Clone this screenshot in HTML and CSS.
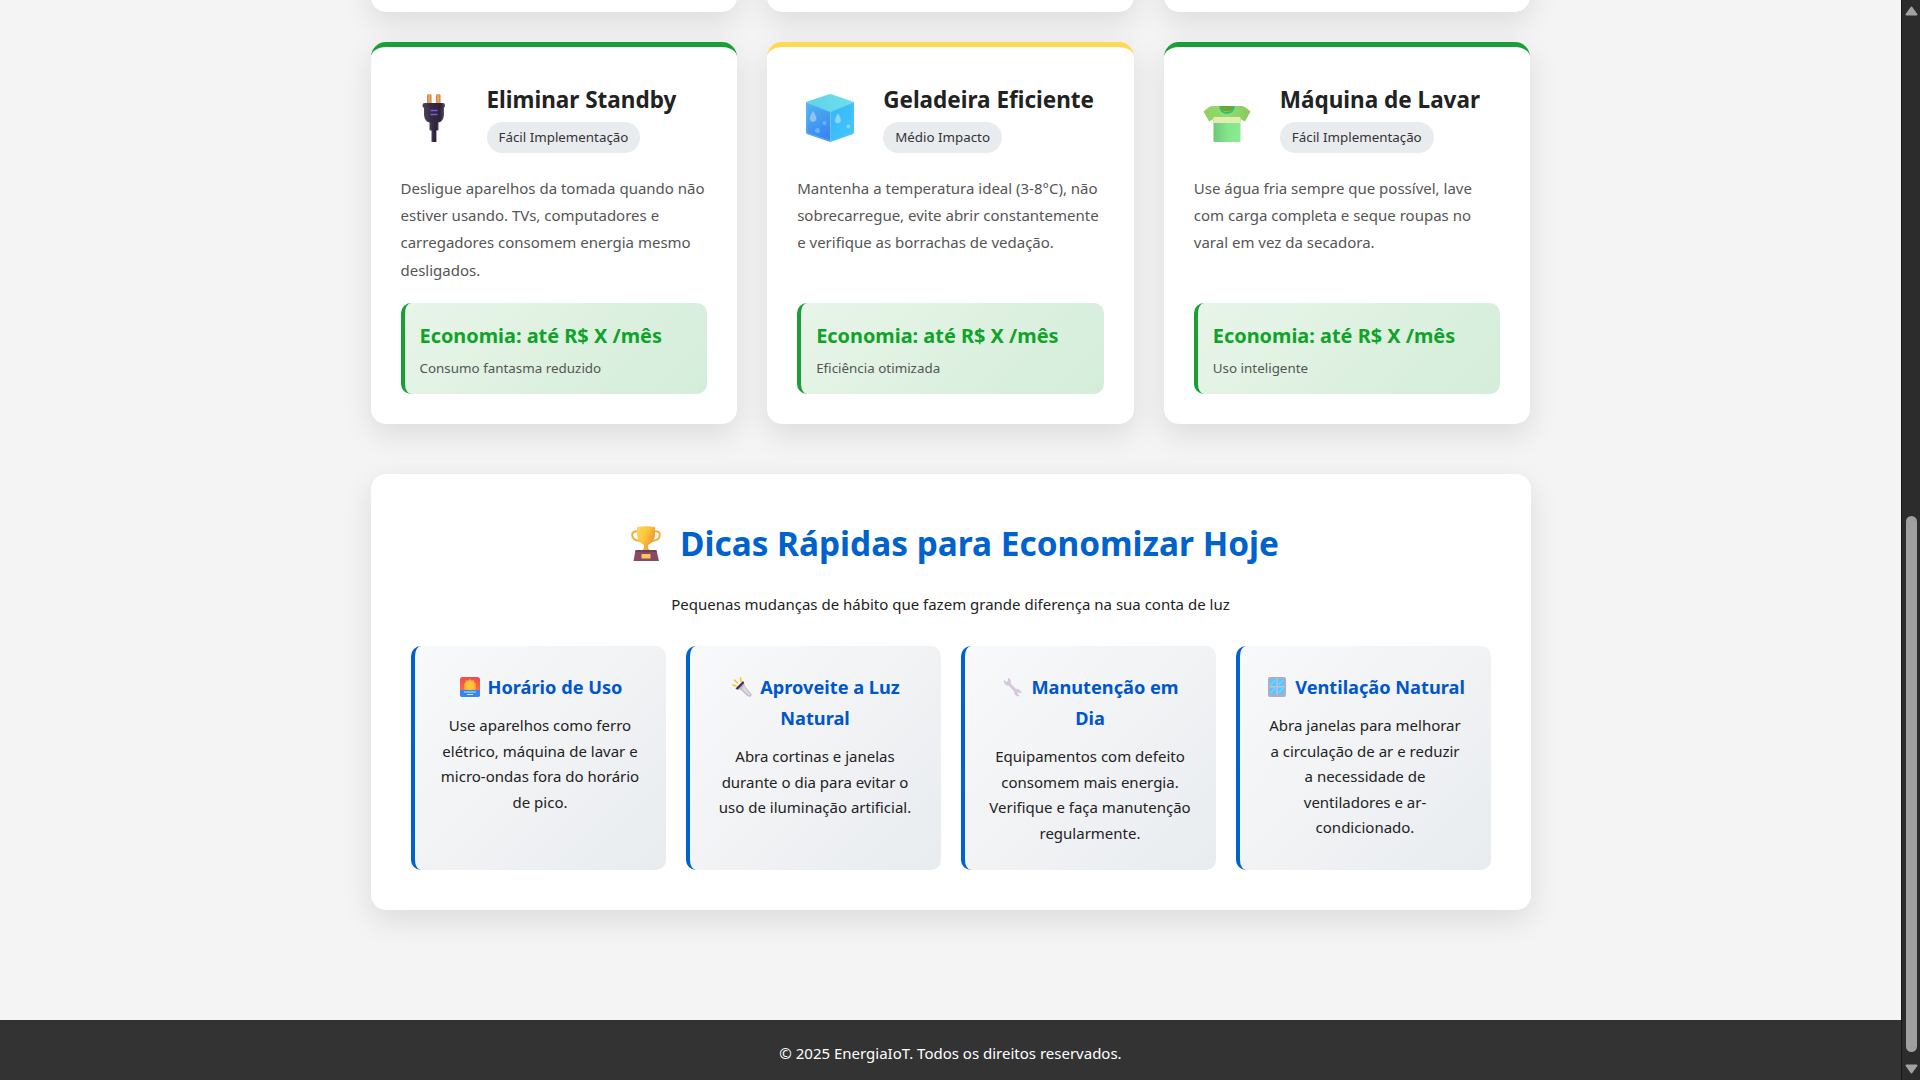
FILE: index.html
```html
<!DOCTYPE html>
<html lang="pt-BR">
<head>
<meta charset="utf-8">
<title>EnergiaIoT</title>
<link rel="stylesheet" href="styles.css">
</head>
<body>
<div class="page">
  <main class="container">
    <div class="cards cards-previous">
      <div class="card"></div><div class="card"></div><div class="card"></div>
    </div>
    <div class="cards">
      <article class="card card-easy">
        <div class="card-head">
          <svg class="card-icon" viewBox="0 0 66 66">
            <defs>
              <linearGradient id="prong"><stop offset="0" stop-color="#c98042"/><stop offset=".5" stop-color="#f0ab62"/><stop offset="1" stop-color="#c57a40"/></linearGradient>
              <linearGradient id="plug"><stop offset="0" stop-color="#4b4358"/><stop offset=".35" stop-color="#352b42"/><stop offset=".8" stop-color="#2c2239"/><stop offset="1" stop-color="#564e62"/></linearGradient>
            </defs>
            <rect x="26" y="9" width="4.5" height="11" rx="1.6" fill="url(#prong)"/>
            <rect x="35" y="9" width="4.5" height="11" rx="1.6" fill="url(#prong)"/>
            <path d="M23 21H43V29C43 34 40 37.500 37 37.500H29C26 37.500 23 34 23 29Z" fill="url(#plug)"/>
            <rect x="21.5" y="18" width="22.5" height="5" rx="2.3" fill="url(#plug)"/>
            <path d="M28.500 37H37.500V44.500Q37.500 45.500 36.500 45.500H29.500Q28.500 45.500 28.500 44.500Z" fill="url(#plug)"/>
            <path d="M30.500 45H35.500V57H30.500Z" fill="url(#plug)"/>
            <path d="M29.500 25.500H36.500M29.500 29.500H36.500" stroke="#8055dc" stroke-width="1.500"/>
          </svg>
          <div><h3>Eliminar Standby</h3><span class="badge">Fácil Implementação</span></div>
        </div>
        <p class="desc">Desligue aparelhos da tomada quando não<br>estiver usando. TVs, computadores e<br>carregadores consomem energia mesmo<br>desligados.</p>
        <div class="saving"><strong>Economia: até R$ X /mês</strong><small>Consumo fantasma reduzido</small></div>
      </article>
      <article class="card card-medium">
        <div class="card-head">
          <svg class="card-icon" viewBox="0 0 66 66">
            <defs>
              <linearGradient id="iceL" x1="0" y1="0" x2=".4" y2="1"><stop offset="0" stop-color="#50b7ef"/><stop offset="1" stop-color="#3b86f4"/></linearGradient>
              <linearGradient id="iceR" x1="0" y1="0" x2="1" y2="1"><stop offset="0" stop-color="#36b6f3"/><stop offset="1" stop-color="#43c6ff"/></linearGradient>
              <linearGradient id="iceT"><stop offset="0" stop-color="#60d2e8"/><stop offset="1" stop-color="#6ce0ee"/></linearGradient>
            </defs>
            <path d="M9 17L33.500 26V57L10 49Q9 48.600 9 47Z" fill="url(#iceL)"/>
            <path d="M57 17L33.500 26V57L56 49Q57 48.600 57 47Z" fill="url(#iceR)"/>
            <path d="M9 17L32 9.300Q33.300 9 34.500 9.300L57 17L33.500 27Z" fill="url(#iceT)"/>
            <path d="M10 18V48M10 18L33.500 27L56 18V48M33.500 27V56M10 48L33.500 56L56 48" fill="none" stroke="#5fc4fa" stroke-opacity=".6"/>
            <path d="M16 25.500C18.500 29.500 19.500 31.500 19.500 33.500A3.500 3.500 0 0 1 12.500 33.500C12.500 31.500 14 28.500 16 25.500Z" fill="#8fc4ee" stroke="#5aa2ec" stroke-width=".6"/>
            <path d="M41 28.500C43.200 31.500 44 33.500 44 35.300A3 3 0 0 1 38 35.300C38 33.500 39.500 30.500 41 28.500Z" fill="#8ed9f7" stroke="#68c4f5" stroke-width=".6"/>
            <circle cx="27.500" cy="38" r="2" fill="#6ab3fa"/><circle cx="20.500" cy="45.500" r="2.500" fill="#69b0fb"/><circle cx="51.500" cy="41.500" r="2" fill="#78d8fd"/>
          </svg>
          <div><h3>Geladeira Eficiente</h3><span class="badge">Médio Impacto</span></div>
        </div>
        <p class="desc">Mantenha a temperatura ideal (3-8°C), não<br>sobrecarregue, evite abrir constantemente<br>e verifique as borrachas de vedação.</p>
        <div class="saving"><strong>Economia: até R$ X /mês</strong><small>Eficiência otimizada</small></div>
      </article>
      <article class="card card-easy">
        <div class="card-head">
          <svg class="card-icon" viewBox="0 0 66 66">
            <defs>
              <linearGradient id="shirt"><stop offset="0" stop-color="#70c777"/><stop offset=".5" stop-color="#82e58a"/><stop offset="1" stop-color="#89ec92"/></linearGradient>
              <linearGradient id="sleeve"><stop offset="0" stop-color="#92cf61"/><stop offset=".5" stop-color="#8ede73"/><stop offset="1" stop-color="#8bc75d"/></linearGradient>
            </defs>
            <path d="M18.500 21H47.500Q50 21.300 51.500 22.500L56.500 26.500L51 36.500L46.500 34V36H19.500V34L15 36.500L9.500 26.500L14.500 22.500Q16 21 18.500 21Z" fill="url(#sleeve)"/>
            <path d="M19.500 35H46.500V56Q46.500 57 45.500 57H20.500Q19.500 57 19.500 56Z" fill="url(#shirt)"/>
            <path d="M19.500 32H46.500V38H19.500Z" fill="#e3edad"/>
            <path d="M26.500 21H39.500C39 25.500 36.500 26.500 33 26.500S27 25.500 26.500 21Z" fill="#69a831"/>
            <path d="M26 21C26.500 26 29 28 33 28S39.500 26 40 21" fill="none" stroke="#30bd76" stroke-width="1.800"/>
          </svg>
          <div><h3>Máquina de Lavar</h3><span class="badge">Fácil Implementação</span></div>
        </div>
        <p class="desc">Use água fria sempre que possível, lave<br>com carga completa e seque roupas no<br>varal em vez da secadora.</p>
        <div class="saving"><strong>Economia: até R$ X /mês</strong><small>Uso inteligente</small></div>
      </article>
    </div>
    <section class="quick">
      <h2>
        <svg class="trophy" viewBox="0 0 30 36">
          <defs><linearGradient id="gold" x1="0" x2="1" y1="0" y2=".6"><stop offset="0" stop-color="#ffd65c"/><stop offset=".5" stop-color="#fbc63b"/><stop offset="1" stop-color="#ee8e35"/></linearGradient></defs>
          <path d="M7.500 5.500Q1 4.500 1.200 9Q1.500 14.500 9 15M22.500 5.500Q29 4.500 28.800 9Q28.500 14.500 21 15" fill="none" stroke="#f2ad3b" stroke-width="2"/>
          <path d="M6 1Q15 -.5 24 1V8C24 14 20 17.500 17 19V22Q17.500 23.500 20 25H10Q12.500 23.500 13 22V19C10 17.500 6 14 6 8Z" fill="url(#gold)"/>
          <path d="M4.500 24.500H25.500L28 35H2.500Z" fill="#874a62"/><path d="M4.500 24H25.500V26H4.500Z" fill="#6f3f5b"/>
          <rect x="10.500" y="28" width="9" height="4.500" rx=".6" fill="#fcc85b"/>
        </svg>
        Dicas Rápidas para Economizar Hoje</h2>
      <p class="lead">Pequenas mudanças de hábito que fazem grande diferença na sua conta de luz</p>
      <div class="tips">
        <div class="tip">
          <h4><svg class="tip-icon" viewBox="0 0 22 22"><defs><linearGradient id="sky" x1="0" y1="0" x2="0" y2="1"><stop offset="0" stop-color="#ef4b4c"/><stop offset="1" stop-color="#ff7a45"/></linearGradient></defs><rect x="1" y="1" width="20" height="20" rx="2.500" fill="url(#sky)"/><path d="M11 3L12.700 4.500L15 4.200L15.500 6.500L17.300 8L16.500 10L17.300 12L16 14H6L4.700 12L5.500 10L4.700 8L6.500 6.500L7 4.200L9.300 4.500Z" fill="#ffae2c"/><circle cx="11" cy="9.500" r="4.500" fill="#ffc43c"/><path d="M1 14H21V18.500Q21 21 18.500 21H3.500Q1 21 1 18.500Z" fill="#3487f2"/><path d="M5 16H17M8 18.500H14" stroke="#c9e6fb" stroke-width="1.200"/></svg>Horário de Uso</h4>
          <p>Use aparelhos como ferro<br>elétrico, máquina de lavar e<br>micro-ondas fora do horário<br>de pico.</p>
        </div>
        <div class="tip">
          <h4><svg class="tip-icon" viewBox="0 0 22 22"><path d="M2 9L5 10M3.500 4L6.500 7M9.500 2L10 5.500" stroke="#ffc12e" stroke-width="1.600" stroke-linecap="round"/><path d="M5.500 13L12.500 6L14.500 11L20.500 18Q21 19.500 19.500 20.700Q18 21 16.500 20L10 14Z" fill="#c4b8cd"/><path d="M13 9.500L14 12L19.500 18.500L18 19.500L11 13Z" fill="#e2d9e6"/><path d="M4.500 12.500L12 5L13.200 7L6.500 13.700Z" fill="#40354a"/></svg>Aproveite a Luz<br>Natural</h4>
          <p>Abra cortinas e janelas<br>durante o dia para evitar o<br>uso de iluminação artificial.</p>
        </div>
        <div class="tip">
          <h4><svg class="tip-icon" viewBox="0 0 22 22"><path d="M6.500 2Q9.500 4 8.300 7.500L14 13.500Q18.500 13 19 17L16.500 15.700L15 17.200L17 20Q12.500 20 12.500 15.500L6.800 9.300Q2.500 9.500 2 4.500L4.500 6.500L6.500 5Z" fill="#d6cadf" stroke="#c3b5d0" stroke-width=".5"/></svg>Manutenção em<br>Dia</h4>
          <p>Equipamentos com defeito<br>consomem mais energia.<br>Verifique e faça manutenção<br>regularmente.</p>
        </div>
        <div class="tip">
          <h4><svg class="tip-icon" viewBox="0 0 22 22"><rect x="2" y="1" width="18" height="20" rx="2" fill="#b5a9c3"/><rect x="4" y="3" width="14" height="15.500" fill="#55c8fb"/><path d="M4.500 9L9 4M12.500 9L17 4M4.500 17L9 12M12.500 17L17 12" stroke="#75d5ff" stroke-width="1.200"/><path d="M11 2.500V19M3.500 10.800H18.500" stroke="#c9bdd6" stroke-width="1.400"/></svg>Ventilação Natural</h4>
          <p>Abra janelas para melhorar<br>a circulação de ar e reduzir<br>a necessidade de<br>ventiladores e ar-<br>condicionado.</p>
        </div>
      </div>
    </section>
  </main>
  <footer class="footer">© 2025 EnergiaIoT. Todos os direitos reservados.</footer>
</div>
<div class="scrollbar">
  <svg class="arrow" viewBox="0 0 13 10"><path d="M6.500 1.500L11.500 8.500H1.500Z" fill="#a2a2a2" stroke="#a2a2a2" stroke-width="2" stroke-linejoin="round"/></svg>
  <div class="thumb"></div>
  <svg class="arrow" viewBox="0 0 13 10"><path d="M6.500 8.500L11.500 1.500H1.500Z" fill="#a2a2a2" stroke="#a2a2a2" stroke-width="2" stroke-linejoin="round"/></svg>
</div>
</body>
</html>
```
FILE: styles.css
```css
* { margin: 0; padding: 0; box-sizing: border-box; }

body {
  display: flex;
  height: 1080px;
  overflow: hidden;
  background: #f4f4f4;
  color: #222;
  font-family: "Noto Sans", "Open Sans", sans-serif;
  font-size: 15px;
  line-height: 25.6px;
  white-space: nowrap;
}

.page { flex: 1; display: flex; flex-direction: column; }
.container { width: 1160px; margin: 0 auto; flex: 1; }

.cards { display: grid; grid-template-columns: repeat(3, 1fr); gap: 30px; }
.card {
  height: 382px;
  padding: 30px;
  display: flex;
  flex-direction: column;
  background: #fff;
  border-top: 5px solid #1a9f36;
  border-radius: 15px;
  box-shadow: 0 10px 30px rgba(0, 0, 0, .1);
}
.card-medium { border-top-color: #ffd952; }
.cards-previous { margin: -370px 0 30px; }

.card-head { display: flex; gap: 20px; height: 76px; margin-top: 8px; }
.card-icon { width: 66px; height: 66px; }
h3 { font-size: 22.5px; line-height: 30px; margin-bottom: 7px; font-weight: 700; }
.badge {
  display: block;
  width: max-content;
  padding: 5px 12px;
  border-radius: 16px;
  background: #e9ecef;
  color: #333;
  font-size: 13.35px;
  line-height: 21px;
}
.desc { margin-top: 14px; color: #555; line-height: 27.2px; }

.saving {
  margin-top: auto;
  height: 91px;
  padding: 15px;
  border-left: 4px solid #1a9f36;
  border-radius: 10px;
  background: linear-gradient(135deg, #e8f5e8, #d4edda);
}
.saving strong { display: block; font-size: 19.9px; line-height: 35px; color: #0fa32a; }
.saving small { display: block; font-size: 13.4px; line-height: 22px; margin-top: 4px; color: #555; }

.quick {
  height: 436px;
  margin-top: 50px;
  padding: 40px;
  border-radius: 15px;
  background: #fff;
  box-shadow: 0 10px 30px rgba(0, 0, 0, .1);
  text-align: center;
}
h2 { display: flex; justify-content: center; align-items: center; gap: 19px; height: 59px; padding-left: 9px; font-size: 33.4px; color: #0062cc; }
.trophy { width: 30px; height: 36px; }
.lead { margin: 18px 0 29px; line-height: 26px; }
.tips { display: grid; grid-template-columns: repeat(4, 1fr); gap: 20px; }
.tip {
  height: 224px;
  padding: 26px 20px;
  border-left: 4px solid #0062cc;
  border-radius: 10px;
  background: linear-gradient(135deg, #f8f9fa, #e9ecef);
}
h4 { font-size: 18.2px; line-height: 31px; margin-bottom: 10px; color: #0056cc; }
.tip-icon { width: 22px; height: 22px; margin: 0 7px 0 1px; vertical-align: -4px; }

.footer { height: 60px; padding-top: 21px; background: #333; color: #fff; text-align: center; }

.scrollbar {
  width: 19px;
  display: flex;
  flex-direction: column;
  align-items: center;
  padding: 6px 0;
  background: #2c2c2c;
  border-left: 1px solid #161616;
}
.arrow { width: 13px; height: 10px; }
.thumb { width: 11px; height: 537px; margin: 500px 0 12px; border-radius: 6px; background: #9f9f9f; }
```
